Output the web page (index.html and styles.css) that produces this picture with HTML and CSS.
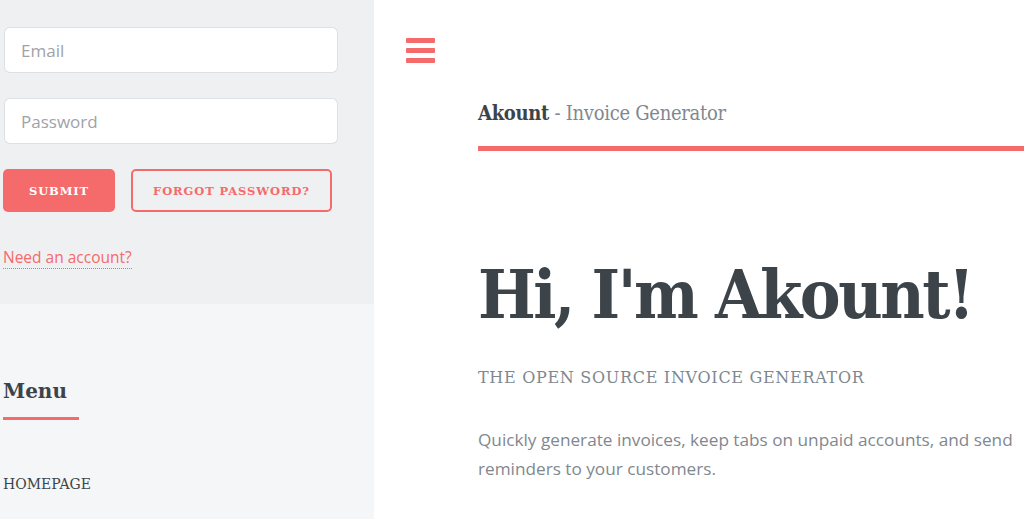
FILE: index.html
```html
<!DOCTYPE html>
<html lang="en">
<head>
<meta charset="utf-8">
<title>Akount - Invoice Generator</title>
<link rel="stylesheet" href="styles.css">
</head>
<body>
<div class="page">
  <aside class="sidebar">
    <section class="login">
      <form class="login-form">
        <input class="field" type="email" placeholder="Email">
        <input class="field" type="password" placeholder="Password">
        <div class="actions">
          <button class="btn btn-primary" type="button">Submit</button>
          <button class="btn btn-outline" type="button">Forgot Password?</button>
        </div>
      </form>
      <div class="signup"><a class="signup-link" href="#">Need an account?</a></div>
    </section>
    <nav class="menu">
      <h2 class="menu-title">Menu</h2>
      <ul class="menu-list">
        <li><a class="menu-link" href="#">Homepage</a></li>
      </ul>
    </nav>
  </aside>
  <main class="main">
    <a class="toggle" href="#" aria-label="Toggle menu"><span class="bar"></span><span class="bar"></span><span class="bar"></span></a>
    <div class="inner">
      <header class="site-header"><strong class="brand">Akount</strong> - Invoice Generator</header>
      <section class="banner">
        <h1 class="title">Hi, I'm Akount!</h1>
        <p class="tagline">The open source invoice generator</p>
        <p class="lead">Quickly generate invoices, keep tabs on unpaid accounts, and send reminders to your customers.</p>
      </section>
    </div>
  </main>
</div>
</body>
</html>
```
FILE: styles.css
```css
html, body {
  margin: 0;
  padding: 0;
  height: 100%;
  overflow: hidden;
}
body {
  background: #ffffff;
  color: #7f888f;
  font-family: "Open Sans", "DejaVu Sans", sans-serif;
}
.page {
  display: flex;
  min-height: 519px;
}
.sidebar {
  width: 374px;
  flex-shrink: 0;
  background: #f5f6f7;
  min-height: 519px;
}
.login {
  background: #eff0f2;
  padding: 27px 0 35px 3px;
}
.login-form {
  display: flex;
  flex-direction: column;
  align-items: flex-start;
}
.field {
  box-sizing: border-box;
  width: 334px;
  height: 46px;
  margin: 0 0 25px 1px;
  padding: 0 16px;
  border: 1px solid rgba(210, 215, 217, 0.75);
  border-radius: 6px;
  background: #ffffff;
  font-family: "Open Sans", sans-serif;
  font-size: 17px;
  color: #3d4449;
  outline: none;
}
.field::placeholder {
  color: #9fa3a6;
  opacity: 1;
}
.actions {
  display: flex;
  gap: 16px;
}
.btn {
  box-sizing: border-box;
  height: 43px;
  border-radius: 5px;
  font-family: "DejaVu Serif", serif;
  font-weight: bold;
  font-size: 11.5px;
  letter-spacing: 0.9px;
  text-transform: uppercase;
  cursor: pointer;
}
.btn-primary {
  width: 112px;
  background: #f56a6a;
  border: none;
  color: #ffffff;
}
.btn-outline {
  width: 201px;
  background: transparent;
  border: 2px solid #f56a6a;
  color: #f56a6a;
}
.signup {
  margin-top: 33px;
  font-size: 15.5px;
  line-height: 24px;
}
.signup-link {
  color: #f56a6a;
  text-decoration: none;
  border-bottom: 1px dotted #f56a6a;
}
.menu {
  padding: 75px 0 0 3px;
}
.menu-title {
  margin: 0;
  font-family: "DejaVu Serif", serif;
  font-weight: bold;
  font-size: 20px;
  line-height: 24px;
  color: #3d4449;
}
.menu-title::after {
  content: "";
  display: block;
  width: 76px;
  height: 3px;
  margin-top: 14px;
  background: #f56a6a;
}
.menu-list {
  list-style: none;
  margin: 52px 0 0;
  padding: 0;
}
.menu-link {
  font-family: "DejaVu Serif", serif;
  font-size: 14px;
  line-height: 20px;
  letter-spacing: 0;
  text-transform: uppercase;
  color: #3d4449;
  text-decoration: none;
}
.main {
  flex: 1;
  min-width: 0;
  padding-left: 32px;
}
.toggle {
  display: flex;
  flex-direction: column;
  gap: 5px;
  width: 29px;
  margin-top: 38px;
}
.bar {
  display: block;
  height: 5px;
  border-radius: 1px;
  background: #f56a6a;
}
.inner {
  margin-left: 72px;
}
.site-header {
  margin-top: 38px;
  padding-bottom: 21px;
  border-bottom: 5px solid #f56a6a;
  font-family: "DejaVu Serif Condensed", "DejaVu Serif", serif;
  font-stretch: condensed;
  font-size: 20px;
  line-height: 24px;
  letter-spacing: -0.3px;
  color: #7f888f;
  white-space: nowrap;
}
.brand {
  color: #3d4449;
  font-weight: bold;
}
.title {
  margin: 109px 0 0;
  font-family: "DejaVu Serif Condensed", "DejaVu Serif", serif;
  font-stretch: condensed;
  font-weight: bold;
  font-size: 68px;
  line-height: 68px;
  letter-spacing: -2.5px;
  color: #3d4449;
  white-space: nowrap;
}
.tagline {
  margin: 40px 0 0;
  font-family: "DejaVu Serif", serif;
  font-size: 16px;
  line-height: 20px;
  letter-spacing: 0.7px;
  text-transform: uppercase;
  color: #7f888f;
}
.lead {
  margin: 37px 0 0;
  width: 546px;
  font-size: 17.2px;
  line-height: 29px;
  color: #7f888f;
}
```
